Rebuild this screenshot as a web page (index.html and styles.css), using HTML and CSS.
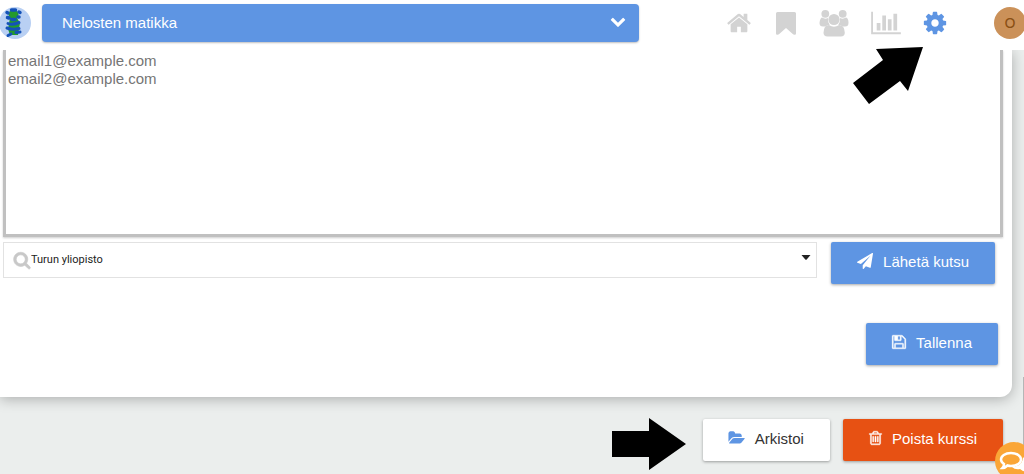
FILE: index.html
```html
<!DOCTYPE html>
<html lang="fi">
<head>
<meta charset="utf-8">
<meta name="viewport" content="width=device-width, initial-scale=1">
<title>Nelosten matikka</title>
<link rel="stylesheet" href="styles.css">
</head>
<body>
<header class="topbar">
  <a class="logo" href="#" aria-label="Etusivu">
    <svg viewBox="0 0 32 32" width="32" height="32">
      <circle cx="16" cy="16" r="16" fill="#b9d0f3"/>
      <ellipse cx="14.500" cy="7.500" rx="5" ry="4.500" fill="#249a2c"/>
      <path d="M11 11h7l3 5-2 12h-8l-2-6z" fill="#249a2c"/>
      <g stroke="#1452b8" stroke-width="3.500" stroke-linecap="round" fill="none">
        <path d="M12.500 3h4M8 5.500l1 .5M20 5l1 .5M8.500 10.500l1.500.5M19 10h1M13 12.500h3"/>
        <path stroke-width="3" d="M9 16.500q4 2 11-1M8 21q5 2 12 .5M9 28.500l3-1.500M17 25.500l4-.5"/>
      </g>
    </svg>
  </a>
  <div class="course">
    <select class="course-select" aria-label="Kurssi"><option>Nelosten matikka</option></select>
    <svg class="course-chevron" viewBox="0 0 1792 1792" width="16" height="16"><path fill="#fff" d="M1683 808l-742 741q-19 19-45 19t-45-19l-742-741q-19-19-19-45.500t19-45.500l166-165q19-19 45-19t45 19l531 531 531-531q19-19 45-19t45 19l166 165q19 19 19 45.500t-19 45.500z"/></svg>
  </div>
  <nav class="tools">
    <a class="tool" href="#" aria-label="Koti"><svg viewBox="0 0 1792 1792" width="26" height="26"><path d="M1472 992v480q0 26-19 45t-45 19h-384v-384h-256v384h-384q-26 0-45-19t-19-45v-480q0-1 .5-3t.5-3l575-474 575 474q1 2 1 6zm223-69l-62 74q-8 9-21 11h-3q-13 0-21-7l-692-577-692 577q-12 8-24 7-13-2-21-11l-62-74q-8-10-7-23.500t11-21.500l719-599q32-26 76-26t76 26l244 204v-195q0-14 9-23t23-9h192q14 0 23 9t9 23v408l219 182q10 8 11 21.500t-7 23.500z"/></svg></a>
    <a class="tool" href="#" aria-label="Kirjanmerkki"><svg viewBox="0 0 26 26" width="26" height="26"><path d="M4.500 2h17a1.500 1.500 0 0 1 1.500 1.500v20q0 1.500-1.500 1.300-1 0-2-1L13 18l-6.500 5.800q-1 1-2 1Q3 25 3 23.500v-20A1.500 1.500 0 0 1 4.500 2z"/></svg></a>
    <a class="tool" href="#" aria-label="Ryhmä"><svg viewBox="0 0 30 26" width="30" height="26">
      <circle cx="5.300" cy="3.800" r="3.900"/><circle cx="22.700" cy="3.800" r="3.900"/>
      <path d="M2 7.500q3 2 6 .5-.5 4 1.800 6.800Q7 15 5.500 16.500H3Q-.5 16.500-.5 13 0 8 2 7.500zM26 7.500q-3 2-6 .5.500 4-1.800 6.800 2.800.2 4.300 1.700h2.500q3.500 0 3.500-3.500 0-5-2.500-5.500z"/>
      <circle cx="14" cy="9.500" r="5.600"/>
      <path d="M9 15q5 3.600 10 0 5.600.2 5.800 7.800 0 3.700-4 3.700H7.500q-4 0-4-3.700Q3.700 15.200 9 15z"/></svg></a>
    <a class="tool" href="#" aria-label="Tilastot"><svg viewBox="0 0 2048 1792" width="30" height="26"><path d="M640 896v512h-256v-512h256zm384-512v1024h-256v-1024h256zm1024 1152v128h-2048v-1536h128v1408h1920zm-640-896v768h-256v-768h256zm384-384v1152h-256v-1152h256z"/></svg></a>
    <a class="tool tool-active" href="#" aria-label="Asetukset"><svg viewBox="0 0 1792 1792" width="26" height="26"><path d="M1152 896q0-106-75-181t-181-75-181 75-75 181 75 181 181 75 181-75 75-181zm512-109v222q0 12-8 23t-20 13l-185 28q-19 54-39 91 35 50 107 138 10 12 10 25t-9 23q-27 37-99 108t-94 71q-12 0-26-9l-138-108q-44 23-91 38-16 136-29 186-7 28-36 28h-222q-14 0-24.500-8.500t-11.500-21.500l-28-184q-49-16-90-37l-141 107q-10 9-25 9-14 0-25-11-126-114-165-168-7-10-7-23 0-12 8-23 15-21 51-66.500t54-70.500q-27-50-41-99l-183-27q-13-2-21-12.500t-8-23.500v-222q0-12 8-23t19-13l186-28q14-46 39-92-40-57-107-138-10-12-10-24 0-10 9-23 26-36 98.500-107.500t94.500-71.500q13 0 26 10l138 107q44-23 91-38 16-136 29-186 7-28 36-28h222q14 0 24.500 8.500t11.500 21.500l28 184q49 16 90 37l142-107q9-9 24-9 13 0 25 10 129 119 165 170 7 8 7 22 0 12-8 23-15 21-51 66.500t-54 70.500q26 50 41 98l183 28q13 2 21 12.500t8 23.500z"/></svg></a>
  </nav>
  <button class="avatar" type="button">O</button>
</header>

<main class="page">
  <section class="card">
    <textarea class="emails" aria-label="Sähköpostiosoitteet" placeholder="email1@example.com&#10;email2@example.com"></textarea>
    <div class="invite">
      <div class="school">
        <svg viewBox="0 0 1792 1792" width="18" height="18"><path fill="#c8c8c8" stroke="#c8c8c8" stroke-width="60" d="M1216 832q0-185-131.500-316.500t-316.500-131.500-316.500 131.500-131.500 316.500 131.500 316.500 316.500 131.500 316.500-131.500 131.500-316.500zm512 832q0 52-38 90t-90 38q-54 0-90-38l-343-342q-179 124-399 124-143 0-273.500-55.500t-225-150-150-225-55.500-273.500 55.500-273.500 150-225 225-150 273.500-55.500 273.500 55.500 225 150 150 225 55.500 273.500q0 220-124 399l343 343q37 37 37 90z"/></svg>
        <select class="school-select" aria-label="Oppilaitos"><option>Turun yliopisto</option></select>
        <svg class="school-caret" viewBox="0 0 10 10" width="10" height="10"><path fill="#222" d="M.5 2h9L5.700 6.400q-.7.700-1.400 0z"/></svg>
      </div>
      <button class="btn btn-blue" type="button"><svg viewBox="0 0 1792 1792" width="16" height="16"><path d="M1764 11q33 24 27 64l-256 1536q-5 29-32 45-14 8-31 8-11 0-24-5l-453-185-242 295q-18 23-49 23-13 0-22-4-19-7-30.500-23.500t-11.500-36.500v-349l864-1059-1069 925-395-162q-37-14-40-55-2-40 32-59l1664-960q15-9 32-9 20 0 36 11z"/></svg>Lähetä kutsu</button>
    </div>
    <div class="save">
      <button class="btn btn-blue" type="button"><svg viewBox="128 0 1536 1792" width="14" height="16"><path stroke="#fff" stroke-width="40" d="M512 1536h768v-384h-768v384zm896 0h128v-896q0-14-10-38.500t-20-34.500l-281-281q-10-10-34-20t-39-10v416q0 40-28 68t-68 28h-576q-40 0-68-28t-28-68v-416h-128v1280h128v-416q0-40 28-68t68-28h832q40 0 68 28t28 68v416zm-384-928v-320q0-13-9.500-22.500t-22.500-9.500h-192q-13 0-22.500 9.500t-9.500 22.500v320q0 13 9.500 22.500t22.500 9.500h192q13 0 22.500-9.500t9.500-22.500zm640 32v928q0 40-28 68t-68 28h-1344q-40 0-68-28t-28-68v-1344q0-40 28-68t68-28h928q40 0 88 20t76 48l280 280q28 28 48 76t20 88z"/></svg>Tallenna</button>
    </div>
  </section>
  <div class="actions">
    <svg class="arrow-right" viewBox="0 0 76 54" width="76" height="54"><path d="M1 14h37V1l37 26-37 26V40H1z"/></svg>
    <button class="btn btn-white" type="button"><svg viewBox="0 0 1850 1792" width="16" height="16"><path d="M1815 952q0 31-31 66l-336 396q-43 51-120.500 86.500t-143.500 35.500h-1088q-34 0-60.500-13t-26.500-43q0-31 31-66l336-396q43-51 120.500-86.500t143.500-35.500h1088q34 0 60.500 13t26.500 43zm-343-344v160h-832q-94 0-197 47.500t-164 119.500l-337 396-5 6q0-4-.5-12.500t-.5-12.500v-960q0-92 66-158t158-66h320q92 0 158 66t66 158v32h544q92 0 158 66t66 158z"/></svg>Arkistoi</button>
    <button class="btn btn-red" type="button"><svg viewBox="192 0 1408 1792" width="13" height="16"><path stroke="#fff" stroke-width="40" d="M704 736v576q0 14-9 23t-23 9h-64q-14 0-23-9t-9-23v-576q0-14 9-23t23-9h64q14 0 23 9t9 23zm256 0v576q0 14-9 23t-23 9h-64q-14 0-23-9t-9-23v-576q0-14 9-23t23-9h64q14 0 23 9t9 23zm256 0v576q0 14-9 23t-23 9h-64q-14 0-23-9t-9-23v-576q0-14 9-23t23-9h64q14 0 23 9t9 23zm128 724v-948h-896v948q0 22 7 40.500t14.500 27 10.500 8.500h832q3 0 10.500-8.500t14.500-27 7-40.500zm-672-1076h448l-48-117q-7-9-17-11h-317q-10 2-17 11zm928 32v64q0 14-9 23t-23 9h-96v948q0 83-47 143.500t-113 60.500h-832q-66 0-113-58.500t-47-141.500v-952h-96q-14 0-23-9t-9-23v-64q0-14 9-23t23-9h309l70-167q15-37 54-63t79-26h320q40 0 79 26t54 63l70 167h309q14 0 23 9t9 23z"/></svg>Poista kurssi</button>
  </div>
</main>

<svg class="arrow-up" viewBox="0 0 72 60" width="72" height="60"><path d="M1 37l30-23-7-11L71 1 56 45l-8-10-31 23z"/></svg>
<div class="scroll-thumb"></div>
<button class="chat" type="button" aria-label="Chat">
  <svg viewBox="0 0 38 38" width="38" height="38">
    <path fill="#fff" d="M28 15q6 5 1 10l2 5q-4-1-6-3-5 1-8-2 11-1 11-10z"/>
    <path fill="#faa637" stroke="#fff" stroke-width="2.500" d="M16 11c6 0 10 3 10 6.500S22 24 16 24q-2 0-3.500-.5Q10 26 7.500 26q1.500-1.500 1.500-4-3-2-3-4.500C6 14 10 11 16 11z"/>
  </svg>
</button>
</body>
</html>
```
FILE: styles.css
```css
* { box-sizing: border-box; }

body {
  margin: 0;
  min-height: 100vh;
  overflow: hidden;
  background: #ebeeed;
  font-family: "Liberation Sans", Arial, sans-serif;
  font-size: 15px;
  color: #333;
}

button, select, textarea { font: inherit; margin: 0; }
button { cursor: pointer; }
svg { display: block; flex: none; overflow: visible; }

.topbar {
  display: flex;
  align-items: center;
  height: 50px;
  padding-bottom: 4px;
  background: #fff;
}

.logo { margin: 0 11px 0 -1px; }

.course {
  display: grid;
  flex: 1;
  align-items: center;
}

.course-select {
  grid-area: 1 / 1;
  width: 100%;
  height: 38px;
  padding: 0 20px 2px;
  border: 0;
  border-radius: 4px;
  appearance: none;
  background: #5e95e3;
  color: #fff;
  box-shadow: 0 1px 2px rgba(0, 0, 0, 0.25);
}

.course-chevron {
  grid-area: 1 / 1;
  justify-self: end;
  margin: 0 13px 4px 0;
  pointer-events: none;
}

.tools {
  display: flex;
  gap: 21px;
  margin: 0 46px 0 87px;
}

.tool { fill: #d3d3d3; }
.tool-active { fill: #5e95e3; }

.avatar {
  flex: none;
  width: 32px;
  height: 32px;
  margin-right: -2px;
  padding: 0;
  border: 0;
  border-radius: 50%;
  background: #cb9159;
  color: #8a4f14;
  font-family: "DejaVu Sans", sans-serif;
  font-size: 14px;
}

.card {
  margin-right: 12px;
  padding: 0 9px 32px 3px;
  border-radius: 0 0 12px 0;
  background: #fff;
  box-shadow: 0 2px 14px rgba(0, 0, 0, 0.28);
  clip-path: inset(0 -24px -24px 0);
}

.emails {
  display: block;
  width: 100%;
  height: 187px;
  padding: 2px;
  border: 3px solid #c0c0c0;
  border-top: 0;
  resize: none;
  line-height: 18px;
  color: #333;
  box-shadow: 0 1px 2px rgba(0, 0, 0, 0.2);
}

.emails::placeholder { color: #757575; }

.invite {
  display: flex;
  align-items: flex-start;
  gap: 14px;
  margin: 5px 8px 0 0;
}

.school {
  display: flex;
  flex: 1;
  align-items: center;
  height: 36px;
  padding: 0 5px 0 9px;
  border: 1px solid #e2e2e2;
}

.school-select {
  flex: 1;
  height: 34px;
  padding: 0 0 2px;
  border: 0;
  appearance: none;
  background: none;
  color: #222;
  font-family: Roboto, sans-serif;
  font-size: 11px;
}

.school-caret { margin-bottom: 4px; }

.btn {
  display: flex;
  align-items: center;
  gap: 10px;
  height: 42px;
  padding: 0 26px 4px;
  border: 0;
  border-radius: 2px;
  box-shadow: 0 1px 3px rgba(0, 0, 0, 0.35);
  white-space: nowrap;
}

.btn-blue { background: #5e95e3; color: #fff; fill: #fff; }
.btn-white { background: #fff; color: #333; fill: #5e95e3; }
.btn-red { background: #e75113; color: #fff; fill: #fff; }

.save {
  display: flex;
  justify-content: flex-end;
  margin: 39px 5px 0 0;
}

.actions {
  display: flex;
  align-items: flex-start;
  justify-content: flex-end;
  gap: 13px;
  margin: 22px 21px 0 0;
}

.arrow-right {
  margin: -2px 3px 0 0;
}

.arrow-up {
  position: absolute;
  top: 46px;
  right: 100px;
}

.scroll-thumb {
  position: absolute;
  right: 0;
  top: 377px;
  bottom: 0;
  width: 1px;
  background: #b4b6b6;
}

.chat {
  position: absolute;
  right: -9px;
  bottom: -6px;
  width: 38px;
  height: 38px;
  padding: 0;
  border: 0;
  border-radius: 50%;
  background: #faa637;
}
```
